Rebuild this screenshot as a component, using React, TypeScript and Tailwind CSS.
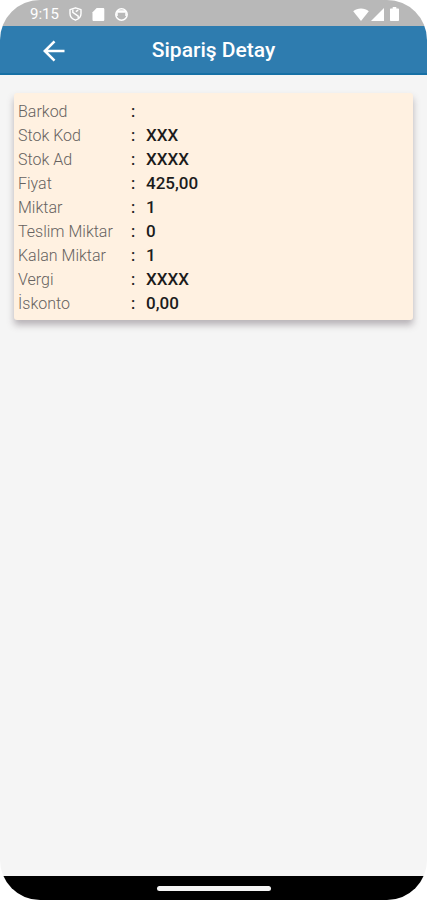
type DetailRow = {
  label: string;
  value: string;
};

const rows: DetailRow[] = [
  { label: "Barkod", value: "" },
  { label: "Stok Kod", value: "XXX" },
  { label: "Stok Ad", value: "XXXX" },
  { label: "Fiyat", value: "425,00" },
  { label: "Miktar", value: "1" },
  { label: "Teslim Miktar", value: "0" },
  { label: "Kalan Miktar", value: "1" },
  { label: "Vergi", value: "XXXX" },
  { label: "İskonto", value: "0,00" },
];

function StatusBar() {
  return (
    <div className="flex h-[26px] items-center justify-between bg-[#b8b8b8] pt-[2px] pr-7 pl-[30px] text-white">
      <div className="flex items-center gap-[10px]">
        <span className="text-[15px] leading-5">9:15</span>
        <svg className="h-[14px] w-[13px]" viewBox="0 0 13 14" fill="none" stroke="currentColor" strokeWidth="1.4" aria-hidden="true">
          <path d="M6.500 .8 12 2.700v4c0 3-2.200 5.200-5.500 6.500C3.200 11.900 1 9.700 1 6.700v-4Z" strokeLinejoin="round" />
          <path d="M3.800 2.500v2.800l5.400 3.800v2M9.200 3.200 6.800 4.600" />
        </svg>
        <svg className="size-[13px]" viewBox="0 0 13 13" fill="currentColor" aria-hidden="true">
          <path d="M4.700 0h6.300c.8 0 1.300.5 1.300 1.300v10.400c0 .8-.5 1.300-1.300 1.300H1.800c-.8 0-1.300-.5-1.300-1.300V4.200Z" />
        </svg>
        <svg className="size-[13px]" viewBox="0 0 13 13" fill="none" stroke="currentColor" strokeWidth="1.500" aria-hidden="true">
          <circle cx="6.500" cy="6.500" r="5.700" />
          <path d="M2 3.500h9" strokeWidth="2.500" />
          <path d="M2 4.500v3.500M11 4.500v3.500" />
        </svg>
      </div>
      <div className="flex items-center gap-[2px]">
        <svg className="h-[13px] w-4" viewBox="0 0 16 13" fill="currentColor" aria-hidden="true">
          <path d="M8 13 .2 3.200C2.400 1.400 5 .5 8 .5s5.600.9 7.800 2.700Z" />
        </svg>
        <svg className="size-[13px]" viewBox="0 0 13 13" fill="currentColor" aria-hidden="true">
          <path d="M13 0v13H0Z" />
        </svg>
        <svg className="ml-1 h-[14px] w-[9px]" viewBox="0 0 9 14" fill="currentColor" aria-hidden="true">
          <path d="M2.700 0h3.600v1.500H8c.6 0 1 .4 1 1V13c0 .6-.4 1-1 1H1c-.6 0-1-.4-1-1V2.500c0-.6.4-1 1-1h1.700Z" />
        </svg>
      </div>
    </div>
  );
}

function Header() {
  return (
    <header className="grid h-[49px] grid-cols-[1fr_auto_1fr] items-center border-b-2 border-[#1670a5] bg-[#2e7caf] pt-[2px] text-white">
      <button type="button" aria-label="Geri" className="ml-10 flex size-7 items-center justify-center">
        <svg className="size-[22px]" viewBox="0 0 22 22" fill="none" stroke="currentColor" strokeWidth="2.600" aria-hidden="true">
          <path d="M21.500 11H2.200M11.500 1.300 1.800 11l9.700 9.700" />
        </svg>
      </button>
      <h1 className="text-[21px] font-medium">Sipariş Detay</h1>
    </header>
  );
}

function DetailCard() {
  return (
    <dl className="mx-[14px] mt-[18px] rounded-[3px] bg-[#fff1e1] px-1 pt-[7px] pb-1 shadow-[0_5px_7px_rgba(70,55,65,0.35)]">
      {rows.map((row) => (
        <div key={row.label} className="flex h-6 items-center">
          <dt className="flex w-32 shrink-0 text-base font-light text-[#666260]">
            <span className="w-[113px]">{row.label}</span>
            <span className="font-medium text-[#222222]">:</span>
          </dt>
          <dd className="text-[17px] font-medium text-[#1c1c1c]">{row.value}</dd>
        </div>
      ))}
    </dl>
  );
}

export default function App() {
  return (
    <div className="bg-white font-['Roboto',sans-serif]">
      <div className="flex min-h-screen flex-col overflow-hidden rounded-[40px] bg-[#f5f5f5]">
        <StatusBar />
        <Header />
        <main className="flex-1">
          <DetailCard />
        </main>
        <div className="flex h-6 items-center justify-center bg-black">
          <div className="h-[5px] w-[114px] rounded-full bg-[#f5f5f5]" />
        </div>
      </div>
    </div>
  );
}
